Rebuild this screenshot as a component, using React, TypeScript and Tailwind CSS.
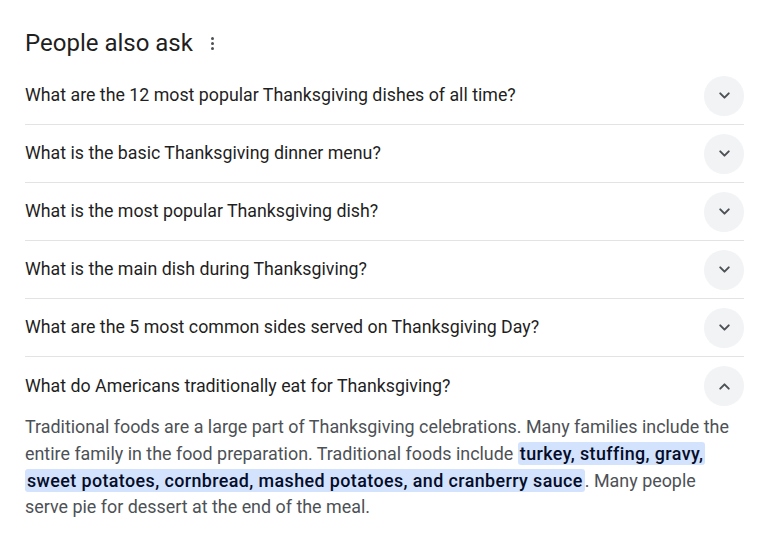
import { ChevronDown, ChevronUp } from "lucide-react";

const questions = [
  "What are the 12 most popular Thanksgiving dishes of all time?",
  "What is the basic Thanksgiving dinner menu?",
  "What is the most popular Thanksgiving dish?",
  "What is the main dish during Thanksgiving?",
  "What are the 5 most common sides served on Thanksgiving Day?",
];

function Toggle({ open }: { open?: boolean }) {
  return (
    <div className="flex h-10 w-10 shrink-0 items-center justify-center rounded-full bg-[#f1f3f4] text-[#4d5156]">
      {open ? <ChevronUp size={17} strokeWidth={2.8} /> : <ChevronDown size={17} strokeWidth={2.8} />}
    </div>
  );
}

export default function App() {
  return (
    <div className="min-h-screen bg-white pl-[25px] pr-[36px] pt-[26px] font-['Roboto',sans-serif] text-[#1f1f1f]">
      <div className="flex items-center gap-[18px]">
        <h2 className="text-[24px] leading-[34px] text-[#1f1f1f]">People also ask</h2>
        <div className="flex flex-col gap-[2px]">
          <span className="h-[3px] w-[3px] rounded-full bg-[#4d5156]" />
          <span className="h-[3px] w-[3px] rounded-full bg-[#4d5156]" />
          <span className="h-[3px] w-[3px] rounded-full bg-[#4d5156]" />
        </div>
      </div>

      <div className="mt-[7px]">
        {questions.map((q) => (
          <div key={q} className="flex h-[58px] items-center justify-between border-b border-[#e3e3e3]">
            <span className="text-[17.8px] text-[#1f1f1f]">{q}</span>
            <Toggle />
          </div>
        ))}
        <div className="flex h-[58px] items-center justify-between">
          <span className="text-[17.8px] text-[#1f1f1f]">What do Americans traditionally eat for Thanksgiving?</span>
          <Toggle open />
        </div>
        <p className="-mt-[1px] pr-[10px] text-[17.9px] leading-[26.8px] text-[#4d5156]">
          Traditional foods are a large part of Thanksgiving celebrations. Many families include the entire family
          in the food preparation. Traditional foods include{" "}
          <span className="rounded-[3px] bg-[#d3e3fd] px-[2px] py-[1px] font-medium tracking-[0.4px] text-[#040c28] [box-decoration-break:clone]">
            turkey, stuffing, gravy, sweet potatoes, cornbread, mashed potatoes, and cranberry sauce
          </span>
          . Many people serve pie for dessert at the end of the meal.
        </p>
      </div>
    </div>
  );
}
